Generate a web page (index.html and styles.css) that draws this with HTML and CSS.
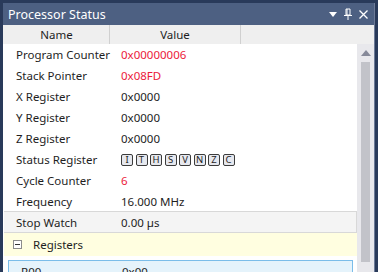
FILE: index.html
```html
<!DOCTYPE html>
<html lang="en">
<head>
  <meta charset="UTF-8" />
  <title>Processor Status</title>
  <link rel="stylesheet" href="styles.css">
</head>
<body>
  <div class="window">
    <div class="titlebar">
      <span class="title">Processor Status</span>
      <span class="tools">
        <svg width="8" height="5" viewBox="0 0 8 5"><path d="M0 0h8L4 5z" fill="#fff"/></svg>
        <svg width="8" height="12" viewBox="0 0 8 12"><path d="M2 1h4v6h-4zM0 7.5h8M4 8v4M3 1v6" stroke="#fff" stroke-width="1" fill="none"/></svg>
        <svg width="9" height="9" viewBox="0 0 9 9"><path d="M0.5 0.5l8 8M8.5 0.5l-8 8" stroke="#fff" stroke-width="1.3"/></svg>
      </span>
    </div>
    <div class="header">
      <div class="col-name">Name</div>
      <div class="col-value">Value</div>
      <div class="col-rest"></div>
    </div>
    <div class="panel">
      <div class="grid">
        <div class="row"><span class="name">Program Counter</span><span class="value red">0x00000006</span></div>
        <div class="row"><span class="name">Stack Pointer</span><span class="value red">0x08FD</span></div>
        <div class="row"><span class="name">X Register</span><span class="value">0x0000</span></div>
        <div class="row"><span class="name">Y Register</span><span class="value">0x0000</span></div>
        <div class="row"><span class="name">Z Register</span><span class="value">0x0000</span></div>
        <div class="row"><span class="name">Status Register</span>
          <span class="value flags">
            <span class="flag">I</span><span class="flag">T</span><span class="flag">H</span><span class="flag">S</span><span class="flag">V</span><span class="flag">N</span><span class="flag">Z</span><span class="flag">C</span>
          </span>
        </div>
        <div class="row"><span class="name">Cycle Counter</span><span class="value red">6</span></div>
        <div class="row"><span class="name">Frequency</span><span class="value">16.000 MHz</span></div>
        <div class="row stopwatch"><span class="name">Stop Watch</span><span class="value">0.00 µs</span></div>
        <div class="group">
          <svg width="9" height="9" viewBox="0 0 9 9"><rect x="0.5" y="0.5" width="8" height="8" fill="#fff" stroke="#8c8c8c"/><path d="M2 4.5h5" stroke="#333"/></svg>
          <span>Registers</span>
        </div>
        <div class="reg"><span class="reg-name">R00</span><span class="reg-value">0x00</span></div>
      </div>
      <div class="scrollbar">
        <svg width="10" height="6" viewBox="0 0 10 6"><path d="M0 6h10L5 0z" fill="#868999"/></svg>
        <div class="thumb"></div>
      </div>
    </div>
  </div>
</body>
</html>
```

FILE: styles.css
```css
body {
  margin: 0;
  background-color: #293a5a;
  font-family: "Noto Sans", "Open Sans", sans-serif;
  font-size: 11.5px;
  color: #1e1e1e;
  height: 272px;
  overflow: hidden;
}
.window {
  margin: 3px 3px 0 3px;
  border-right: 1px solid #6d7b98;
  height: 269px;
  overflow: hidden;
  background: #fff;
}
.titlebar {
  height: 22px;
  background-color: #4d6082;
  color: white;
  display: flex;
  align-items: center;
  justify-content: space-between;
  padding: 0 6px 0 5px;
  font-size: 12.5px;
}
.tools {
  display: flex;
  align-items: center;
  gap: 7px;
}
.header {
  height: 19px;
  display: flex;
  background: #efefef;
  line-height: 19px;
}
.col-name {
  width: 105px;
  text-align: center;
  border-right: 1px solid #d0d0d0;
  margin-left: 1px;
}
.col-value {
  width: 130px;
  text-align: center;
  border-right: 1px solid #d0d0d0;
}
.col-rest { flex: 1; }
.panel {
  display: flex;
  height: 228px;
}
.grid {
  flex: 1;
  background: #fff;
  padding-left: 1px;
}
.row {
  height: 21px;
  display: flex;
  align-items: center;
  white-space: nowrap;
}
.name {
  width: 105px;
  padding-left: 12px;
  box-sizing: border-box;
}
.value {
  padding-left: 12px;
}
.red { color: #ec1a3b; }
.flags {
  display: flex;
  gap: 2.5px;
}
.flag {
  width: 10px;
  height: 10px;
  border: 1px solid #3c3c3c;
  border-radius: 2px;
  font-size: 9.5px;
  line-height: 10px;
  text-align: center;
  background: #e6e8ee;
}
.stopwatch {
  background: #f4f4f4;
  border-top: 1px solid #d8d8d8;
  border-bottom: 1px solid #d8d8d8;
  border-right: 1px solid #d8d8d8;
  height: 20px;
  margin-top: -1px;
}
.group {
  height: 23px;
  background: #fffee0;
  display: flex;
  align-items: center;
  gap: 11px;
  padding-left: 9px;
}
.reg {
  margin: 4px 4px 0 4px;
  height: 20px;
  background: #e5f3fb;
  border: 1px solid #7bbde9;
  display: flex;
  align-items: center;
}
.reg-name { width: 105px; padding-left: 12px; box-sizing: border-box; }
.reg-value { padding-left: 8px; }
.scrollbar {
  width: 17px;
  background: #e8e8ec;
  display: flex;
  flex-direction: column;
  align-items: center;
  padding-top: 6px;
  gap: 6px;
}
.thumb {
  width: 9px;
  height: 200px;
  background: #c2c3c9;
}
```
